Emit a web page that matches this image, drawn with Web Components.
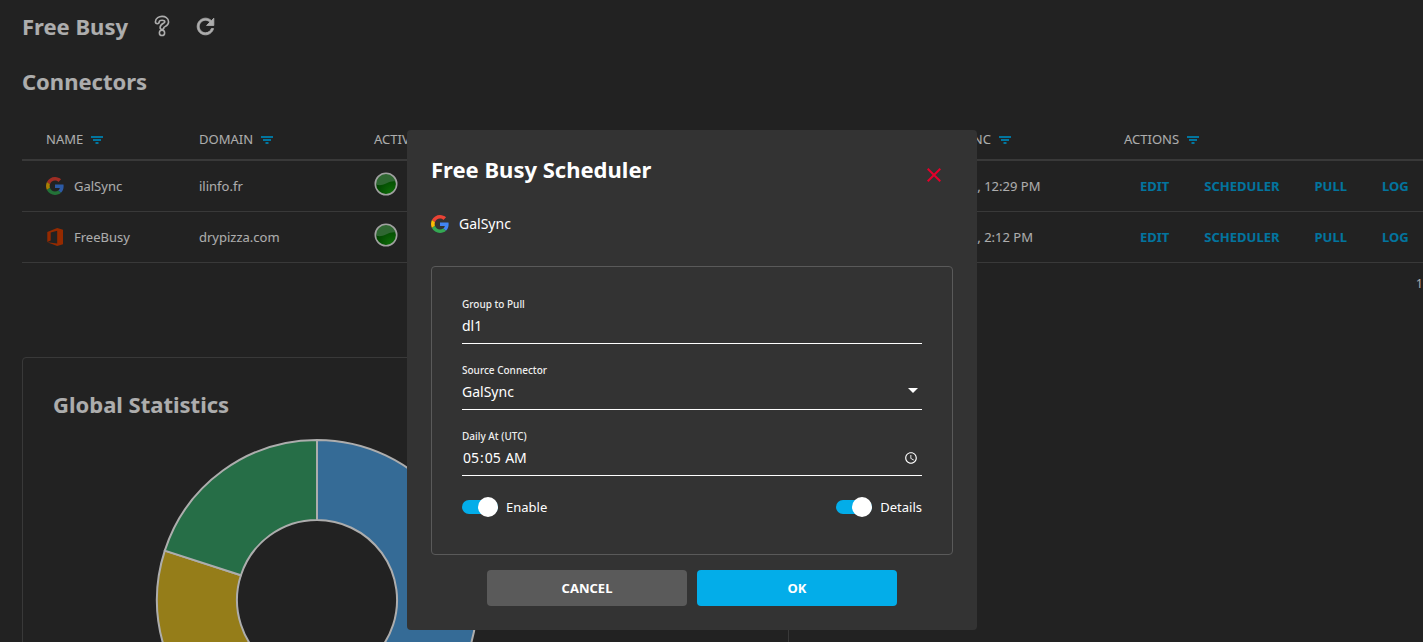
<!DOCTYPE html>
<html lang="en">
<head>
<meta charset="utf-8">
<title>Free Busy</title>
<style>
  html, body { margin: 0; height: 100%; }
  body { background: #333; color: #fff; font: 13px/20px "Noto Sans", sans-serif; overflow: hidden; }
</style>
</head>
<body>
<fb-app></fb-app>
<script>
function define(name, html, setup) {
  const template = document.createElement('template');
  template.innerHTML = html;
  customElements.define(name, class extends HTMLElement {
    connectedCallback() {
      if (this.shadowRoot) return;
      const root = this.attachShadow({ mode: 'open' });
      root.append(template.content.cloneNode(true));
      if (setup) setup.call(this, root);
    }
  });
}

const ICONS = {
  google: ['0 0 48 48', '<path fill="#EA4335" d="M24 9.5c3.54 0 6.71 1.22 9.21 3.6l6.85-6.85C35.9 2.38 30.47 0 24 0 14.62 0 6.51 5.38 2.56 13.22l7.98 6.19C12.43 13.72 17.74 9.5 24 9.5z"/><path fill="#4285F4" d="M46.98 24.55c0-1.57-.15-3.09-.38-4.55H24v9.02h12.94c-.58 2.96-2.26 5.48-4.78 7.18l7.73 6c4.51-4.18 7.09-10.36 7.09-17.65z"/><path fill="#FBBC05" d="M10.53 28.59c-.48-1.45-.76-2.99-.76-4.59s.27-3.14.76-4.59l-7.98-6.19C.92 16.46 0 20.12 0 24c0 3.88.92 7.54 2.56 10.78l7.97-6.19z"/><path fill="#34A853" d="M24 48c6.48 0 11.93-2.13 15.89-5.81l-7.73-6c-2.15 1.45-4.92 2.3-8.16 2.3-6.26 0-11.57-4.22-13.47-9.91l-7.98 6.19C6.51 42.62 14.62 48 24 48z"/>'],
  office: ['0 0 18 18', '<path fill="#dc3e00" d="M11.2 0L17 1.700V16.200L11.200 18L1.300 14.300L11.200 15.400V2.800L4.700 4.400V12.500L1.300 14V4L11.200 0z"/>'],
  filter: ['0 0 12 8', '<path fill="#03ade9" d="M0 0h12v2H0zM2 3h8v2H2zM4.500 6h3v2h-3z"/>'],
  status: ['0 0 24 24', '<defs><radialGradient id="g" cx=".75" cy=".9" r=".8"><stop offset="0" stop-color="#15a00c"/><stop offset="1" stop-color="#006000"/></radialGradient></defs><circle cx="12" cy="12" r="10.700" fill="url(#g)"/><path fill="#46984a" d="M2 12.500A10 10 0 0 1 22 9.500C19 9 16 9.500 12 11.500C8 13.400 5 13.500 2 12.500z"/><circle cx="12" cy="12" r="10.700" fill="none" stroke="#eee" stroke-width="1.600"/>'],
  help: ['0 0 16 22', '<g fill="none" stroke-linecap="round" stroke-linejoin="round"><g stroke="#fff" stroke-width="5.400"><path d="M3.300 6.800C3.300 2.400 12.800 1.800 12.700 7C12.600 10.300 8 9.600 8 12.600"/><path d="M8 17.800v.1" stroke-width="6.800"/></g><g stroke="#333" stroke-width="2.200"><path d="M3.300 6.800C3.300 2.400 12.800 1.800 12.700 7C12.600 10.300 8 9.600 8 12.600"/><path d="M8 17.800v.1" stroke-width="3.600"/></g></g>'],
  refresh: ['0 0 24 24', '<path fill="#fff" stroke="#fff" stroke-width=".8" d="M17.650 6.350C16.200 4.900 14.210 4 12 4c-4.420 0-7.990 3.580-7.990 8s3.570 8 7.990 8c3.730 0 6.840-2.550 7.730-6h-2.080c-.82 2.330-3.040 4-5.650 4-3.310 0-6-2.690-6-6s2.690-6 6-6c1.660 0 3.140.69 4.220 1.780L13 11h7V4l-2.350 2.350z"/>'],
  close: ['0 0 14 14', '<path fill="none" stroke="#e4002b" stroke-width="2" d="M.7.7l12.600 12.600M13.300.7L.7 13.300"/>'],
  arrow: ['0 0 10 5', '<path fill="#fff" d="M0 0h10L5 5z"/>']
};

/* <fb-icon name w h> : one glyph from the set above */
define('fb-icon', `<style>:host{display:inline-block;flex:none}svg{display:block}</style>`, function (root) {
  const [box, body] = ICONS[this.getAttribute('name')];
  const w = this.getAttribute('w'), h = this.getAttribute('h') || w;
  root.innerHTML += `<svg width="${w}" height="${h}" viewBox="${box}" aria-hidden="true">${body}</svg>`;
});

/* heading row with its tool buttons */
define('fb-header', `<style>
  :host{display:flex;align-items:center;height:32px}
  h1{margin:0 26px 0 0;font-size:22px;line-height:32px;font-weight:700}
  button{all:unset;display:flex;margin-right:23px}
</style>
<h1><slot></slot></h1>
<button aria-label="Help"><fb-icon name="help" w="16" h="22"></fb-icon></button>
<button aria-label="Refresh"><fb-icon name="refresh" w="25"></fb-icon></button>`);

define('fb-connectors', `<style>
  :host{display:block}
  h2{margin:0;font-size:22px;line-height:32px;font-weight:700}
  table{width:100%;margin-top:22px;border-collapse:separate;border-spacing:0;table-layout:fixed}
  th,td{padding:0;text-align:left;font-weight:400;white-space:nowrap}
  th{height:40px;border-bottom:2px solid #555}
  td{height:50px;border-bottom:1px solid #555}
  th:first-child,td:first-child{padding-left:24px}
  th fb-icon{margin-left:8px}
  .name{display:flex;align-items:center;gap:10px}
  .state{padding-bottom:4px}
  .state fb-icon{display:block}
  .acts{display:flex;gap:3px}
  .acts button{all:unset;padding:0 16px;color:#03ade9;font-weight:700}
  .range{display:flex;justify-content:flex-end;height:42px;align-items:center;font-size:12px}
  .range span{width:136px}
</style>
<h2>Connectors</h2>
<table>
  <colgroup><col style="width:177px"><col style="width:175px"><col style="width:549px"><col style="width:201px"><col></colgroup>
  <thead><tr>
    <th>NAME<fb-icon name="filter" w="12" h="8"></fb-icon></th>
    <th>DOMAIN<fb-icon name="filter" w="12" h="8"></fb-icon></th>
    <th>ACTIVE</th>
    <th>NEXT SYNC<fb-icon name="filter" w="12" h="8"></fb-icon></th>
    <th>ACTIONS<fb-icon name="filter" w="12" h="8"></fb-icon></th>
  </tr></thead>
  <tbody></tbody>
</table>
<div class="range"><span>1</span></div>`, function (root) {
  const rows = [
    ['google', 'GalSync', 'ilinfo.fr', '5/5/2022, 12:29 PM'],
    ['office', 'FreeBusy', 'drypizza.com', '5/5/2022, 2:12 PM']
  ];
  root.querySelector('tbody').innerHTML = rows.map(([icon, name, domain, sync]) => `<tr>
    <td><div class="name"><fb-icon name="${icon}" w="18"></fb-icon><span>${name}</span></div></td>
    <td>${domain}</td>
    <td><div class="state"><fb-icon name="status" w="24"></fb-icon></div></td>
    <td>${sync}</td>
    <td><div class="acts"><button>EDIT</button><button>SCHEDULER</button><button>PULL</button><button>LOG</button></div></td>
  </tr>`).join('');
});

define('fb-stats', `<style>
  :host{display:block;box-sizing:border-box;border:1px solid #555;border-radius:4px;padding:30px}
  h2{margin:0;font-size:22px;line-height:32px;font-weight:700}
  svg{display:block;margin:18px 0 0 102px}
</style>
<h2>Global Statistics</h2>
<svg width="324" height="324" viewBox="-162 -162 324 324" role="img" aria-label="Donut chart" stroke="#fff" stroke-width="2">
  <path fill="#4f9edd" d="M0-160A160 160 0 1 1-94 129.400L-47 64.700A80 80 0 1 0 0-80z"/>
  <path fill="#dcb926" d="M-94 129.400A160 160 0 0 1-152.200-49.400L-76.100-24.700A80 80 0 0 0-47 64.700z"/>
  <path fill="#38a269" d="M-152.200-49.400A160 160 0 0 1 0-160V-80A80 80 0 0 0-76.100-24.700z"/>
</svg>`);

/* <fb-field kind="text|select|time" label value> */
define('fb-field', `<style>
  :host{display:block;height:50px;margin-bottom:16px;box-sizing:border-box;border-bottom:1px solid #fff}
  label{display:block;font-size:10px;line-height:20px;font-weight:500;color:#eee}
  .box{display:flex;align-items:center;position:relative}
  input,select{all:unset;flex:1;height:24px;line-height:24px;font-size:14px;color:#fff;color-scheme:dark}
  fb-icon{position:absolute;top:8px;right:4px;pointer-events:none}
</style>
<label for="control"></label><div class="box"></div>`, function (root) {
  const kind = this.getAttribute('kind'), value = this.getAttribute('value');
  root.querySelector('label').textContent = this.getAttribute('label');
  root.querySelector('.box').innerHTML = kind === 'select'
    ? `<select id="control"><option>${value}</option></select><fb-icon name="arrow" w="10" h="5"></fb-icon>`
    : `<input id="control" type="${kind}" value="${value}">`;
});

define('fb-toggle', `<style>
  :host{display:block}
  label{display:flex;align-items:center;gap:8px}
  input{appearance:none;margin:0;width:36px;height:20px;display:grid;align-items:center}
  input::before,input::after{content:"";grid-area:1/1}
  input::before{height:14px;border-radius:7px;background:#03ade9}
  input::after{width:20px;height:20px;border-radius:50%;background:#fff;justify-self:end}
</style>
<label><input type="checkbox" checked><slot></slot></label>`);

define('fb-button', `<style>
  :host{display:block;width:200px}
  button{all:unset;display:block;box-sizing:border-box;width:100%;height:36px;line-height:36px;border-radius:4px;text-align:center;font-size:13px;font-weight:700;background:#5a5a5a}
  :host([primary]) button{background:#03ade9}
</style>
<button><slot></slot></button>`);

define('fb-dialog', `<style>
  :host{display:block;box-sizing:border-box;width:570px;padding:24px;border-radius:4px;background:#333}
  header{display:flex;justify-content:space-between;align-items:flex-start}
  h2{margin:0;font-size:22px;line-height:30px;font-weight:700}
  header button{all:unset;display:flex;padding:14px 12px 0 0}
  .who{display:flex;align-items:center;gap:10px;height:24px;margin:28px 0 30px;font-size:14px}
  form{border:1px solid #5a5a5a;border-radius:4px;padding:27px 30px 37px}
  .row{display:flex;justify-content:space-between;padding-top:5px}
  footer{display:flex;justify-content:center;gap:10px;margin-top:15px}
</style>
<header><h2>Free Busy Scheduler</h2><button aria-label="Close"><fb-icon name="close" w="14"></fb-icon></button></header>
<div class="who"><fb-icon name="google" w="18"></fb-icon><span>GalSync</span></div>
<form>
  <fb-field kind="text" label="Group to Pull" value="dl1"></fb-field>
  <fb-field kind="select" label="Source Connector" value="GalSync"></fb-field>
  <fb-field kind="time" label="Daily At (UTC)" value="05:05"></fb-field>
  <div class="row"><fb-toggle>Enable</fb-toggle><fb-toggle>Details</fb-toggle></div>
</form>
<footer><fb-button>CANCEL</fb-button><fb-button primary>OK</fb-button></footer>`);

define('fb-app', `<style>
  :host{display:block;height:100vh;overflow:hidden}
  main{min-width:1530px;padding:10px 0 0 22px}
  fb-connectors{margin-top:23px}
  fb-stats{width:767px;margin-top:52px}
  .overlay{position:fixed;inset:0;display:flex;justify-content:center;align-items:flex-start;padding:130px 39px 0 0;background:rgba(0,0,0,.32)}
</style>
<main>
  <fb-header>Free Busy</fb-header>
  <fb-connectors></fb-connectors>
  <fb-stats></fb-stats>
</main>
<div class="overlay"><fb-dialog role="dialog" aria-label="Free Busy Scheduler"></fb-dialog></div>`);
</script>
</body>
</html>
